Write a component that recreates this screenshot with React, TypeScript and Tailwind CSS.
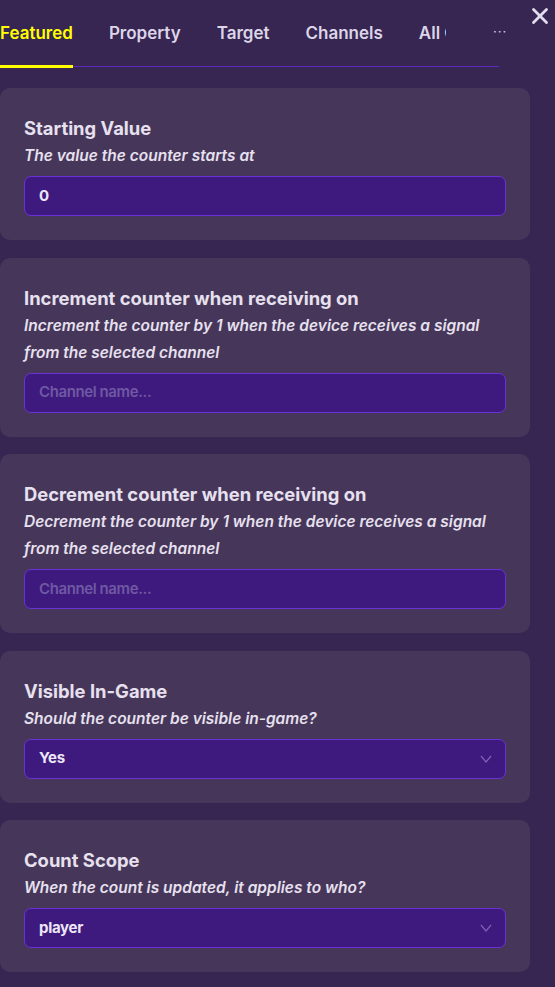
import { X } from 'lucide-react';

type Field = {
  title: string;
  desc: string[];
  value?: string;
  placeholder?: string;
  select?: boolean;
};

const fields: Field[] = [
  { title: 'Starting Value', desc: ['The value the counter starts at'], value: '0' },
  {
    title: 'Increment counter when receiving on',
    desc: ['Increment the counter by 1 when the device receives a signal', 'from the selected channel'],
    placeholder: 'Channel name...',
  },
  {
    title: 'Decrement counter when receiving on',
    desc: ['Decrement the counter by 1 when the device receives a signal', 'from the selected channel'],
    placeholder: 'Channel name...',
  },
  { title: 'Visible In-Game', desc: ['Should the counter be visible in-game?'], value: 'Yes', select: true },
  { title: 'Count Scope', desc: ['When the count is updated, it applies to who?'], value: 'player', select: true },
];

const tabs = ['Featured', 'Property', 'Target', 'Channels', 'All Options'];

const FieldCard = ({ field }: { field: Field }) => (
  <div className="w-[530px] rounded-[10px] bg-[#463659] pt-[28px] pb-[24px] px-[24px]">
    <div className="text-[18.4px] leading-[24px] font-bold text-[#e6e0ef]">{field.title}</div>
    <div className="mt-[2px] text-[15.5px] leading-[27px] italic font-semibold text-[#e6e0ef]">
      {field.desc.map((line) => (
        <div key={line}>{line}</div>
      ))}
    </div>
    <div className="mt-[7px] h-[40px] rounded-[7px] border border-[#6a32d6] bg-[#3e1a7e] flex items-center px-[14px]">
      {field.value ? (
        <span className="text-[15px] font-bold tracking-[-0.3px] text-[#ece6f6]">{field.value}</span>
      ) : (
        <span className="text-[15px] font-semibold text-[#6f58a3] tracking-[-0.4px]">{field.placeholder}</span>
      )}
      {field.select && (
        <svg className="ml-auto mr-[-1px] w-[12px] h-[8px]" viewBox="0 0 12 8" fill="none">
          <path d="M1 1l5 6 5-6" stroke="#7e62b4" strokeWidth="1.2" />
        </svg>
      )}
    </div>
  </div>
);

export default function App() {
  return (
    <div className="w-[555px] h-[987px] bg-[#372552] overflow-hidden font-['Inter',sans-serif]">
      {/* Header */}
      <div className="relative h-[88px]">
        <div className="absolute left-0 top-[66px] w-[499px] h-[1px] bg-[#5b2bc0]" />
        <div className="relative flex">
          <div className="w-[446px] overflow-hidden">
            <div className="flex gap-[36px] h-[68px] items-start pt-[21px] whitespace-nowrap">
              {tabs.map((t, i) => (
                <div key={t} className="relative h-[47px]">
                  <span
                    className={`text-[17px] leading-[24px] font-semibold ${
                      i === 0 ? 'text-[#ffff00]' : 'text-[#dcd5e8]'
                    }`}
                  >
                    {t}
                  </span>
                  {i === 0 && <div className="absolute left-0 right-0 bottom-0 h-[3px] bg-[#ffff00]" />}
                </div>
              ))}
            </div>
          </div>
          <div className="flex-1 h-[66px] flex items-start pt-[22px] pl-[47px] text-[#d8d0e6] text-[13px] tracking-[1px]">
            ···
          </div>
        </div>
        <button className="absolute top-[3px] right-[2px] text-[#e3dcee]">
          <X size={26} strokeWidth={2.6} />
        </button>
      </div>

      {/* Cards */}
      <div className="flex flex-col gap-[17.5px]">
        {fields.map((f) => (
          <FieldCard key={f.title} field={f} />
        ))}
      </div>
    </div>
  );
}
